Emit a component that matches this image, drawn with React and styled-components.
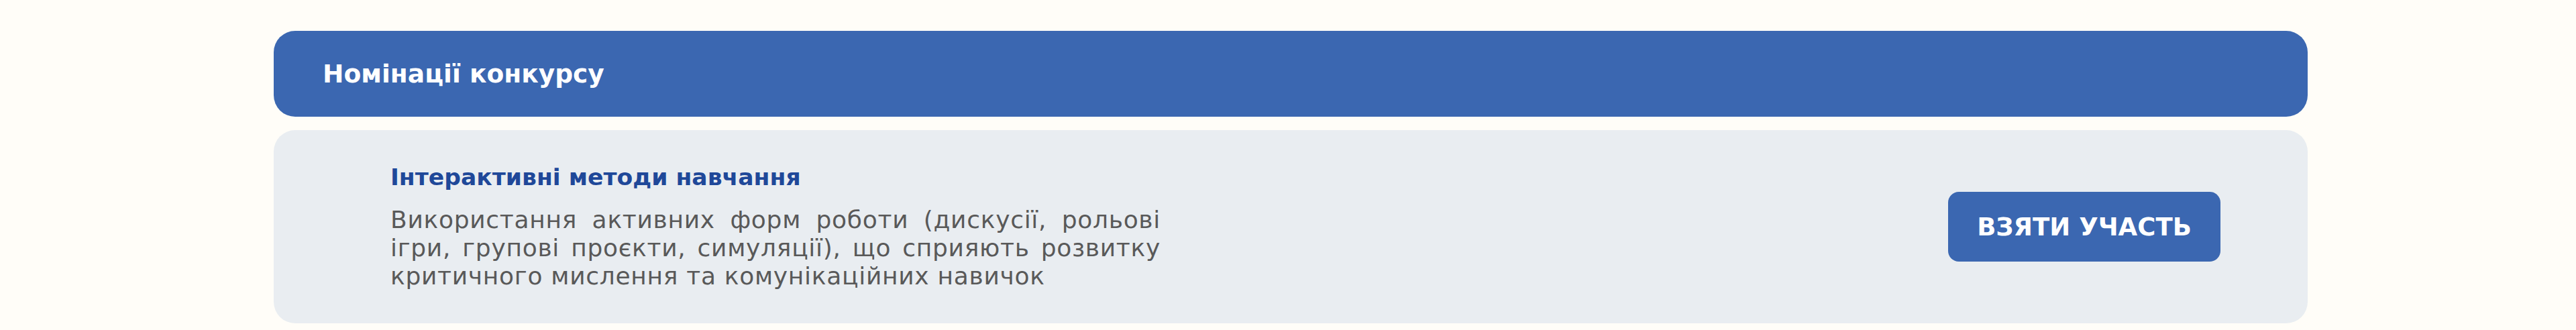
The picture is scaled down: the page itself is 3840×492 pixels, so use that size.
import React from "react";
import styled, { createGlobalStyle } from "styled-components";

const GlobalStyle = createGlobalStyle`
  html, body {
    margin: 0;
    padding: 0;
    background: #fffdf8;
  }

  body {
    font-family: "DejaVu Sans", "Liberation Sans", sans-serif;
  }
`;

const Page = styled.div`
  display: flex;
  flex-direction: column;
  gap: 20px;
  padding: 46px 400px 10px 408px;
`;

const SectionHeader = styled.div`
  display: flex;
  align-items: center;
  height: 128px;
  padding: 0 73px;
  border-radius: 32px;
  background: #3b67b1;
`;

const SectionTitle = styled.h2`
  margin: 0;
  font-size: 37.6px;
  font-weight: 700;
  color: #ffffff;
`;

const NominationCard = styled.div`
  display: flex;
  align-items: center;
  justify-content: space-between;
  height: 288px;
  box-sizing: border-box;
  padding: 0 130px 0 174px;
  border-radius: 32px;
  background: #e9edf1;
`;

const Info = styled.div`
  display: flex;
  flex-direction: column;
  gap: 23px;
  width: 1148px;
`;

const NominationTitle = styled.h3`
  margin: 0;
  font-size: 34.6px;
  font-weight: 700;
  color: #1f4899;
`;

const Description = styled.p`
  margin: 0;
  font-size: 36px;
  line-height: 42px;
  letter-spacing: 0.7px;
  color: #595959;
  text-align: justify;
`;

const JoinButton = styled.button`
  width: 406px;
  height: 104px;
  border: none;
  border-radius: 16px;
  background: #3b67b1;
  color: #ffffff;
  font-family: inherit;
  font-size: 37px;
  font-weight: 700;
  cursor: pointer;
`;

const nominations = [
  {
    title: "Інтерактивні методи навчання",
    text: "Використання активних форм роботи (дискусії, рольові ігри, групові проєкти, симуляції), що сприяють розвитку критичного мислення та комунікаційних навичок",
  },
];

const App = () => {
  return (
    <>
      <GlobalStyle />
      <Page>
        <SectionHeader>
          <SectionTitle>Номінації конкурсу</SectionTitle>
        </SectionHeader>
        {nominations.map((item) => (
          <NominationCard key={item.title}>
            <Info>
              <NominationTitle>{item.title}</NominationTitle>
              <Description>{item.text}</Description>
            </Info>
            <JoinButton>ВЗЯТИ УЧАСТЬ</JoinButton>
          </NominationCard>
        ))}
      </Page>
    </>
  );
};

export default App;
